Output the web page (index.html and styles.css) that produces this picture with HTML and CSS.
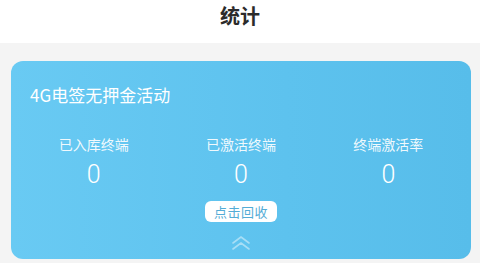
FILE: index.html
```html
<!DOCTYPE html>
<html lang="zh">
<head>
<meta charset="utf-8">
<link rel="stylesheet" href="styles.css">
</head>
<body>
<header class="topbar">统计</header>
<main class="page">
  <section class="card">
    <h2 class="card-title">4G电签无押金活动</h2>
    <div class="stats">
      <div class="stat"><div class="stat-label">已入库终端</div><div class="stat-value">0</div></div>
      <div class="stat"><div class="stat-label">已激活终端</div><div class="stat-value">0</div></div>
      <div class="stat"><div class="stat-label">终端激活率</div><div class="stat-value">0</div></div>
    </div>
    <button class="recycle">点击回收</button>
    <svg class="chev" width="20" height="14" viewBox="0 0 20 14" fill="none" stroke="currentColor" stroke-width="1.6" stroke-linecap="round" stroke-linejoin="round">
      <polyline points="2,7 10,1 18,7"/>
      <polyline points="2,13 10,7 18,13"/>
    </svg>
  </section>
</main>
</body>
</html>
```
FILE: styles.css
```css
* { box-sizing: border-box; }
html, body { margin: 0; padding: 0; }
body {
  width: 480px;
  height: 263px;
  overflow: hidden;
  background: #f4f4f4;
  font-family: "Noto Sans CJK SC", "Noto Sans", sans-serif;
}
.topbar {
  height: 43px;
  background: #fff;
  display: flex;
  align-items: center;
  justify-content: center;
  font-size: 20px;
  font-weight: 700;
  color: #2b2b2b;
  padding-bottom: 12px;
}
.page {
  padding: 18px 9px 0 11px;
}
.card {
  height: 198px;
  border-radius: 12px;
  background: linear-gradient(90deg, #69caf3 0%, #5dc2ee 60%, #57bdea 100%);
  padding: 22px 9px 0 9px;
  display: flex;
  flex-direction: column;
  align-items: center;
  color: #fff;
}
.card-title {
  align-self: flex-start;
  margin: 0 0 0 10px;
  font-size: 17px;
  font-weight: 400;
  line-height: 24px;
}
.stats {
  display: grid;
  grid-template-columns: repeat(3, 1fr);
  width: 100%;
  margin-top: 27px;
}
.stat {
  display: flex;
  flex-direction: column;
  align-items: center;
}
.stat-label {
  font-size: 14px;
  line-height: 20px;
  color: rgba(255,255,255,0.92);
}
.stat-value {
  font-family: "Roboto", "Noto Sans", sans-serif;
  font-weight: 300;
  font-size: 25px;
  line-height: 30px;
  margin-top: 6px;
}
.recycle {
  margin-top: 11px;
  height: 21px;
  padding: 0 9px;
  border: none;
  border-radius: 6px;
  background: #fff;
  color: #54acd6;
  font-family: "Noto Sans CJK SC", sans-serif;
  font-size: 13px;
  line-height: 21px;
  letter-spacing: 0.5px;
}
.chev {
  margin-top: 14px;
  color: rgba(255,255,255,0.45);
}
```
